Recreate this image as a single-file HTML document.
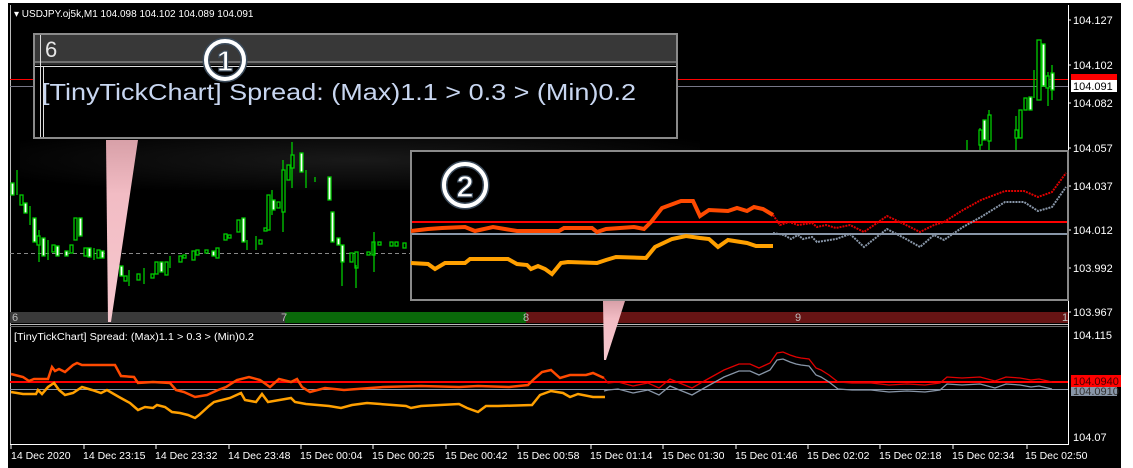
<!DOCTYPE html>
<html><head><meta charset="utf-8"><style>
html,body{margin:0;padding:0;background:#fff;}
svg{display:block;}
text{font-family:"Liberation Sans",sans-serif;}
</style></head><body>
<svg width="1133" height="468" viewBox="0 0 1133 468" xmlns="http://www.w3.org/2000/svg">
<defs>
<radialGradient id="glow" cx="0.5" cy="0.5" r="0.6">
<stop offset="0" stop-color="#2a2a2a"/><stop offset="1" stop-color="#000"/>
</radialGradient>
<linearGradient id="pink" x1="0" y1="0" x2="0" y2="1"><stop offset="0" stop-color="#d8a0a8"/><stop offset="0.3" stop-color="#f2bcc4"/><stop offset="1" stop-color="#f6c8ce"/></linearGradient>
</defs>
<rect x="0" y="0" width="1133" height="468" fill="#fff"/>
<rect x="8" y="3" width="1113" height="465" fill="#000"/>
<rect x="20" y="130" width="680" height="60" fill="url(#glow)" opacity="0.6"/>
<line x1="10.5" y1="5" x2="10.5" y2="445" stroke="#bbb"/>
<line x1="1068.5" y1="5" x2="1068.5" y2="445" stroke="#fff"/>
<line x1="10" y1="324.5" x2="1068" y2="324.5" stroke="#bbb"/>
<line x1="10" y1="326.5" x2="1068" y2="326.5" stroke="#666"/>
<line x1="10" y1="444.5" x2="1069" y2="444.5" stroke="#fff"/>
<text x="14" y="17" font-size="10" fill="#fff">▾ USDJPY.oj5k,M1  104.098 104.102 104.089 104.091</text>
<line x1="10" y1="79.5" x2="1068" y2="79.5" stroke="#f00"/>
<line x1="10" y1="86.5" x2="1068" y2="86.5" stroke="#778"/>
<line x1="10" y1="253.5" x2="410" y2="253.5" stroke="#888" stroke-dasharray="4,3"/>
<g stroke="#0c0" stroke-width="1.3" fill="#000">
<line x1="17" y1="170" x2="17" y2="195"/><line x1="30" y1="206" x2="30" y2="225"/><line x1="39" y1="230" x2="39" y2="262"/><line x1="48" y1="240" x2="48" y2="260"/><line x1="94" y1="248" x2="94" y2="260"/>
<rect x="11" y="183" width="3" height="12" fill="#fff"/><rect x="20" y="195" width="3" height="10"/><rect x="24" y="203" width="3" height="10" fill="#fff"/><rect x="33" y="218" width="3" height="24" fill="#fff"/><rect x="37" y="236" width="3" height="9"/><rect x="42" y="238" width="3" height="18" fill="#fff"/><rect x="52" y="245" width="3" height="7"/><rect x="56" y="246" width="3" height="10" fill="#fff"/><rect x="65" y="251" width="3" height="5" fill="#fff"/><rect x="70" y="245" width="3" height="8"/><rect x="74" y="218" width="3" height="22"/><rect x="79" y="218" width="3" height="18" fill="#fff"/><rect x="84" y="248" width="3" height="8"/><rect x="88" y="248" width="3" height="9" fill="#fff"/><rect x="97" y="250" width="3" height="8"/><rect x="101" y="251" width="3" height="7" fill="#fff"/>
<rect x="120" y="266" width="3" height="10" fill="#fff"/><rect x="124" y="276" width="3" height="5"/><line x1="129" y1="270" x2="129" y2="286"/><rect x="137" y="274" width="3" height="6"/><line x1="144" y1="268" x2="144" y2="284"/><rect x="151" y="274" width="3" height="4"/><rect x="155" y="262" width="3" height="12"/><rect x="160" y="262" width="3" height="10" fill="#fff"/><rect x="165" y="262" width="3" height="13"/><line x1="170" y1="256" x2="170" y2="268"/><rect x="179" y="256" width="3" height="6"/><rect x="183" y="255" width="3" height="3"/><rect x="192" y="251" width="3" height="9"/><rect x="196" y="250" width="3" height="5"/><rect x="205" y="250" width="3" height="3"/><rect x="212" y="251" width="3" height="5" fill="#fff"/><rect x="216" y="248" width="3" height="10"/><rect x="224" y="234" width="3" height="6"/><rect x="228" y="235" width="3" height="3"/><rect x="237" y="220" width="3" height="12"/><rect x="242" y="218" width="3" height="24" fill="#fff"/><line x1="247" y1="240" x2="247" y2="250"/><line x1="256" y1="236" x2="256" y2="250"/><rect x="259" y="240" width="3" height="4"/><rect x="264" y="228" width="3" height="3"/><rect x="267" y="195" width="3" height="35"/><line x1="272" y1="190" x2="272" y2="215"/><rect x="272" y="200" width="3" height="10" fill="#fff"/><rect x="277" y="202" width="3" height="6"/><line x1="283" y1="160" x2="283" y2="232"/><rect x="282" y="170" width="3" height="42"/><rect x="287" y="165" width="3" height="15"/><line x1="292" y1="142" x2="292" y2="188"/><rect x="291" y="155" width="3" height="13"/><rect x="300" y="153" width="3" height="19" fill="#fff"/><line x1="306" y1="170" x2="306" y2="188"/><line x1="315" y1="177" x2="315" y2="182"/><rect x="328" y="177" width="3" height="23" fill="#fff"/><rect x="331" y="212" width="3" height="30" fill="#fff"/><rect x="337" y="238" width="3" height="7" fill="#fff"/><rect x="341" y="245" width="3" height="17" fill="#fff"/><line x1="342" y1="262" x2="342" y2="286"/><rect x="350" y="253" width="3" height="9"/><rect x="355" y="252" width="3" height="16"/><line x1="356" y1="265" x2="356" y2="288"/><rect x="367" y="252" width="3" height="3"/><rect x="372" y="242" width="3" height="13"/><line x1="374" y1="232" x2="374" y2="272"/><rect x="378" y="242" width="3" height="3"/><rect x="390" y="242" width="3" height="4"/><rect x="395" y="242" width="3" height="4"/><rect x="403" y="243" width="3" height="5"/>
<line x1="967" y1="140" x2="967" y2="150"/><line x1="980" y1="128" x2="980" y2="150"/><rect x="979" y="130" width="3" height="15"/><rect x="983" y="120" width="3" height="20" fill="#fff"/><line x1="989" y1="110" x2="989" y2="150"/><rect x="988" y="115" width="3" height="26"/><line x1="1016" y1="116" x2="1016" y2="150"/><rect x="1015" y="130" width="3" height="8"/><rect x="1019" y="110" width="3" height="28"/><rect x="1024" y="98" width="3" height="12"/><rect x="1029" y="97" width="3" height="13" fill="#fff"/><line x1="1034" y1="70" x2="1034" y2="98"/><rect x="1037" y="40" width="4" height="60"/><rect x="1042" y="44" width="3" height="42" fill="#fff"/><line x1="1048" y1="72" x2="1048" y2="106"/><rect x="1046" y="76" width="3" height="12"/><line x1="1052" y1="65" x2="1052" y2="100"/><rect x="1051" y="73" width="3" height="17" fill="#fff"/>
</g>
<g font-size="11" fill="#fff">
<text x="1073" y="24">104.127</text><text x="1073" y="69">104.102</text><text x="1073" y="107">104.082</text><text x="1073" y="152">104.057</text><text x="1073" y="190">104.037</text><text x="1073" y="234">104.012</text><text x="1073" y="272">103.992</text><text x="1073" y="316">103.967</text>
<text x="1073" y="339">104.115</text><text x="1073" y="441">104.07</text>
</g>
<g stroke="#fff"><line x1="1068" y1="20" x2="1071" y2="20"/><line x1="1068" y1="65" x2="1071" y2="65"/><line x1="1068" y1="103" x2="1071" y2="103"/><line x1="1068" y1="148" x2="1071" y2="148"/><line x1="1068" y1="186" x2="1071" y2="186"/><line x1="1068" y1="230" x2="1071" y2="230"/><line x1="1068" y1="268" x2="1071" y2="268"/><line x1="1068" y1="312" x2="1071" y2="312"/></g>
<rect x="1071" y="74" width="46" height="8" fill="#f00"/>
<rect x="1071" y="80" width="46" height="12" fill="#fff"/>
<text x="1073" y="90" font-size="11" fill="#000">104.091</text>
<rect x="10" y="312" width="275" height="11" fill="#3a3a3a"/>
<rect x="285" y="312" width="241" height="11" fill="#0a680a"/>
<rect x="526" y="312" width="542" height="11" fill="#661414"/>
<g font-size="11" fill="#bbb"><text x="12" y="321">6</text><text x="281" y="321">7</text><text x="523" y="321">8</text><text x="795" y="321">9</text><text x="1062" y="321">1</text></g>
<rect x="34" y="34" width="643" height="104" fill="#000" stroke="#8a8a8a" stroke-width="2"/>
<rect x="35" y="35" width="641" height="26" fill="#383838"/>
<line x1="35" y1="62" x2="676" y2="62" stroke="#ddd"/>
<line x1="35" y1="64" x2="676" y2="64" stroke="#555"/>
<line x1="35" y1="66.5" x2="676" y2="66.5" stroke="#ddd"/>
<line x1="40.5" y1="35" x2="40.5" y2="137" stroke="#ddd"/>
<line x1="43.5" y1="67" x2="43.5" y2="137" stroke="#ddd"/>
<text x="45" y="57" font-size="22" fill="#e6e6e6">6</text>
<text x="42" y="100" font-size="23" fill="#c8d6f0" textLength="594" lengthAdjust="spacingAndGlyphs">[TinyTickChart] Spread: (Max)1.1 &gt; 0.3 &gt; (Min)0.2</text>
<circle cx="225" cy="60" r="19" fill="none" stroke="#3a4a5a" stroke-width="7"/>
<circle cx="225" cy="60" r="19" fill="none" stroke="#fff" stroke-width="4"/>
<text x="225" y="71" font-size="29" font-weight="bold" fill="#fff" stroke="#3a4a5a" stroke-width="1.2" text-anchor="middle">1</text>
<polygon points="106,140 138,140 111,322 108,322" fill="url(#pink)"/>
<rect x="411" y="151" width="657" height="149" fill="#000" stroke="#8a8a8a" stroke-width="2"/>
<line x1="412" y1="222" x2="1067" y2="222" stroke="#f00" stroke-width="2"/>
<line x1="412" y1="234" x2="1067" y2="234" stroke="#8896a8" stroke-width="2"/>
<polyline fill="none" stroke="#ff4a00" stroke-width="4" points="411,231 428,229 442,228 465,227 475,231 493,227 517,231 559,231 564,228 592,228 597,232 606,229 634,227 644,229 651,222 662,208 681,201 693,201 700,216 709,210 728,211 737,208 747,211 754,207 763,209 773,215"/>
<polyline fill="none" stroke="#ffa000" stroke-width="4" points="411,263 428,264 435,269 445,263 465,263 470,259 508,259 517,264 527,265 531,269 538,266 545,269 552,274 561,263 568,262 597,263 606,260 616,257 646,258 655,247 672,239 686,236 700,238 709,239 718,247 728,240 747,243 756,246 773,246"/>
<polyline fill="none" stroke="#dd0000" stroke-width="2" stroke-dasharray="2,1" points="773,215 780,225 789,222 798,225 812,223 817,227 826,225 836,228 850,225 864,232 887,216 906,225 920,232 934,225 944,222 963,210 981,200 1005,191 1024,191 1038,197 1052,192 1066,173"/>
<polyline fill="none" stroke="#8896a8" stroke-width="2" stroke-dasharray="2,1" points="773,233 784,235 791,239 798,235 803,239 812,237 817,242 836,239 850,234 864,247 887,229 906,239 920,247 934,235 944,240 963,227 981,217 1005,202 1024,202 1038,211 1052,207 1066,187"/>
<circle cx="465" cy="185" r="21" fill="none" stroke="#3a4a5a" stroke-width="7"/>
<circle cx="465" cy="185" r="21" fill="none" stroke="#fff" stroke-width="4"/>
<text x="465" y="197" font-size="31" font-weight="bold" fill="#fff" stroke="#3a4a5a" stroke-width="1.2" text-anchor="middle">2</text>
<polygon points="603,301 625,301 606,360 604,360" fill="url(#pink)"/>
<text x="14" y="340" font-size="10" fill="#fff" textLength="240" lengthAdjust="spacingAndGlyphs">[TinyTickChart] Spread: (Max)1.1 &gt; 0.3 &gt; (Min)0.2</text>
<line x1="10" y1="382" x2="1068" y2="382" stroke="#f00" stroke-width="2"/>
<line x1="10" y1="389.5" x2="1068" y2="389.5" stroke="#8896a8"/>
<polyline fill="none" stroke="#ff4a00" stroke-width="2.5" points="11,374 23,377 29,381 34,379 48,379 52,367 55,371 59,369 65,372 73,365 77,363 82,365 115,365 121,376 134,377 138,383 153,382 170,383 176,390 184,392 195,397 207,395 218,390 226,387 237,380 249,377 260,380 270,387 279,379 291,382 297,379 302,387 310,392 325,388 344,390 383,387 421,386 459,387 478,386 509,387 528,385 534,379 542,372 551,370 560,378 570,375 586,375 593,373 604,378"/>
<polyline fill="none" stroke="#ffa000" stroke-width="2.5" points="11,392 23,394 36,394 38,390 42,394 48,387 54,383 59,390 65,395 73,393 82,387 92,390 101,393 107,390 119,397 130,403 138,410 145,407 153,408 157,405 165,407 172,412 180,413 188,415 195,418 199,415 209,406 214,402 230,398 241,393 245,400 256,402 262,394 268,402 291,398 295,402 306,404 329,406 341,408 352,405 367,403 406,406 411,408 421,406 459,404 467,408 478,412 486,406 498,406 532,405 540,395 551,391 563,393 570,397 578,394 593,397 605,397"/>
<polyline fill="none" stroke="#e00000" stroke-width="1.3" points="604,378 608,383 618,382 633,386 648,383 659,388 670,379 677,382 692,388 706,380 724,370 739,364 750,364 759,368 770,363 777,353 783,352 790,355 796,357 801,358 809,359 816,368 821,370 829,375 838,382 852,383 871,383 889,385 907,384 925,385 940,383 947,377 962,378 980,377 995,381 1006,377 1020,378 1031,380 1039,379 1052,382"/>
<polyline fill="none" stroke="#8896a8" stroke-width="1.3" points="604,391 608,390 618,389 633,393 648,390 659,395 670,386 677,389 692,395 706,387 724,377 739,371 750,371 759,375 770,370 777,360 783,359 790,362 796,364 801,365 809,366 816,375 821,377 829,382 838,389 852,390 871,390 889,392 907,391 925,392 940,390 947,384 962,385 980,384 995,388 1006,384 1020,385 1031,387 1039,386 1052,389"/>
<rect x="1071" y="386" width="46" height="10" fill="#8896a8"/>
<text x="1073" y="395" font-size="11" fill="#333">104.0910</text>
<rect x="1071" y="375" width="50" height="12" fill="#f00"/>
<text x="1073" y="385" font-size="11" fill="#400">104.0940</text>
<g stroke="#fff"><line x1="11" y1="445" x2="11" y2="449"/><line x1="84" y1="445" x2="84" y2="449"/><line x1="156" y1="445" x2="156" y2="449"/><line x1="229" y1="445" x2="229" y2="449"/><line x1="301" y1="445" x2="301" y2="449"/><line x1="373" y1="445" x2="373" y2="449"/><line x1="446" y1="445" x2="446" y2="449"/><line x1="518" y1="445" x2="518" y2="449"/><line x1="591" y1="445" x2="591" y2="449"/><line x1="663" y1="445" x2="663" y2="449"/><line x1="736" y1="445" x2="736" y2="449"/><line x1="808" y1="445" x2="808" y2="449"/><line x1="880" y1="445" x2="880" y2="449"/><line x1="953" y1="445" x2="953" y2="449"/><line x1="1027" y1="445" x2="1027" y2="449"/></g>
<g font-size="10.5" fill="#fff">
<text x="11" y="459">14 Dec 2020</text><text x="83" y="459">14 Dec 23:15</text><text x="155" y="459">14 Dec 23:32</text><text x="228" y="459">14 Dec 23:48</text><text x="300" y="459">15 Dec 00:04</text><text x="372" y="459">15 Dec 00:25</text><text x="445" y="459">15 Dec 00:42</text><text x="517" y="459">15 Dec 00:58</text><text x="590" y="459">15 Dec 01:14</text><text x="662" y="459">15 Dec 01:30</text><text x="735" y="459">15 Dec 01:46</text><text x="807" y="459">15 Dec 02:02</text><text x="879" y="459">15 Dec 02:18</text><text x="952" y="459">15 Dec 02:34</text><text x="1025" y="459">15 Dec 02:50</text>
</g>
</svg>
</body></html>
